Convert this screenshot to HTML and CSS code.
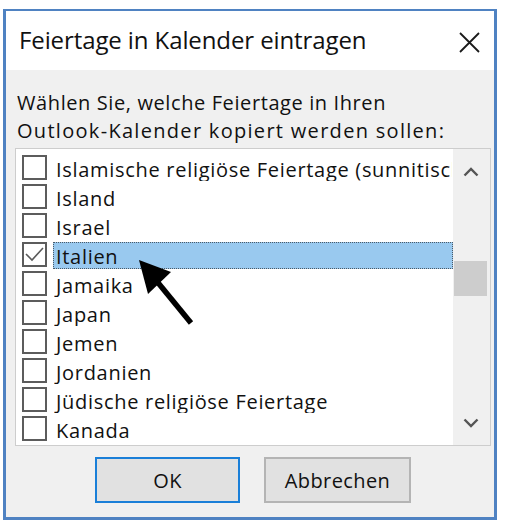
FILE: index.html
```html
<!DOCTYPE html>
<html lang="de">
<head>
    <meta charset="UTF-8">
    <meta name="viewport" content="width=device-width, initial-scale=1.0">
    <title>Feiertage in Kalender eintragen</title>
    <link rel="stylesheet" href="styles.css">
</head>
<body>
    <div class="dialog">
        <div class="titlebar">
            <span class="title">Feiertage in Kalender eintragen</span>
            <svg class="close" width="21" height="21" viewBox="0 0 21 21">
                <path d="M1 1 L20 20 M20 1 L1 20" stroke="#1a1a1a" stroke-width="1.8" fill="none"/>
            </svg>
        </div>

        <div class="content">
            <p class="prompt">Wählen Sie, welche Feiertage in Ihren<br><span class="wide">Outlook-Kalender kopiert werden sollen:</span></p>

            <div class="listbox">
                <ul class="items">
                    <li class="item"><span class="box"></span><span class="label">Islamische religiöse Feiertage (sunnitisch)</span></li>
                    <li class="item"><span class="box"></span><span class="label">Island</span></li>
                    <li class="item"><span class="box"></span><span class="label">Israel</span></li>
                    <li class="item">
                        <span class="box checked">
                            <svg width="21" height="21" viewBox="0 0 21 21"><path d="M2 10 L8 16 L19 4" stroke="#5a5a5a" stroke-width="1.6" fill="none"/></svg>
                        </span>
                        <span class="label selected">Italien</span>
                    </li>
                    <li class="item"><span class="box"></span><span class="label">Jamaika</span></li>
                    <li class="item"><span class="box"></span><span class="label">Japan</span></li>
                    <li class="item"><span class="box"></span><span class="label">Jemen</span></li>
                    <li class="item"><span class="box"></span><span class="label">Jordanien</span></li>
                    <li class="item"><span class="box"></span><span class="label">Jüdische religiöse Feiertage</span></li>
                    <li class="item"><span class="box"></span><span class="label">Kanada</span></li>
                </ul>
                <div class="scrollbar">
                    <span class="arrow up">
                        <svg width="16" height="10" viewBox="0 0 16 10"><path d="M1.5 8.5 L8 2 L14.5 8.5" stroke="#555" stroke-width="2.4" fill="none"/></svg>
                    </span>
                    <div class="track"><div class="thumb"></div></div>
                    <span class="arrow down">
                        <svg width="16" height="10" viewBox="0 0 16 10"><path d="M1.5 1.5 L8 8 L14.5 1.5" stroke="#555" stroke-width="2.4" fill="none"/></svg>
                    </span>
                </div>
            </div>

            <div class="buttons">
                <button class="btn default">OK</button>
                <button class="btn">Abbrechen</button>
            </div>
        </div>

        <!-- annotation arrow drawn over the list -->
        <svg class="pointer" width="70" height="80" viewBox="130 255 70 80">
            <line x1="188" y1="323" x2="152" y2="279" stroke="#000" stroke-width="5.5"/>
            <polygon points="136,260 168,272 145,294" fill="#000"/>
        </svg>
    </div>
</body>
</html>
```

FILE: styles.css
```css
* {
    box-sizing: border-box;
}
body {
    margin: 0;
    background: #fff;
    font-family: "Segoe UI", "Open Sans", sans-serif;
    color: #111;
}
.dialog {
    position: relative;
    margin: 9px 0 0 3px;
    width: 494px;
    height: 511px;
    border: 3px solid #4f82c2;
    border-top-width: 2px;
    background: #f0f0f0;
    display: flex;
    flex-direction: column;
}
.titlebar {
    height: 59px;
    background: #fff;
    display: flex;
    align-items: center;
    justify-content: space-between;
    padding: 0 14px 3px 13px;
}
.title {
    font-size: 24px;
    letter-spacing: -0.1px;
}
.close {
    margin-top: 6px;
}
.content {
    flex: 1;
    padding-top: 19px;
}
.prompt {
    margin: 0 0 3px 11px;
    font-size: 20px;
    line-height: 28px;
    letter-spacing: 0.6px;
}
.prompt .wide {
    letter-spacing: 1.3px;
}
.listbox {
    margin-left: 9px;
    width: 476px;
    height: 298px;
    border: 1px solid #cdcdcd;
    background: #fff;
    display: flex;
}
.items {
    flex: 1;
    min-width: 0;
    list-style: none;
    margin: 0;
    padding: 6px 0 0 0;
    overflow: hidden;
}
.item {
    height: 29px;
    display: flex;
    align-items: flex-start;
    padding-left: 6px;
}
.box {
    flex: none;
    width: 25px;
    height: 25px;
    border: 2px solid #5c5c5c;
    background: #fff;
    display: flex;
    align-items: center;
    justify-content: center;
}
.label {
    flex: 1;
    min-width: 0;
    margin-left: 6px;
    height: 27px;
    padding-left: 2px;
    font-size: 20px;
    line-height: 27px;
    letter-spacing: 0.7px;
    white-space: nowrap;
    overflow: hidden;
    border: 1px solid transparent;
}
.label.selected {
    background: #99c9ef;
    border: 1px dotted #4c5a66;
}
.scrollbar {
    flex: none;
    width: 37px;
    background: #f0f0f0;
    display: flex;
    flex-direction: column;
    padding: 0 3px 0 1px;
}
.arrow {
    display: flex;
    align-items: center;
    justify-content: center;
}
.arrow.up {
    height: 46px;
}
.arrow.down {
    height: 44px;
}
.track {
    flex: 1;
}
.thumb {
    margin-top: 66px;
    height: 35px;
    background: #cdcdcd;
}
.buttons {
    display: flex;
    gap: 24px;
    margin: 11px 0 0 89px;
}
.btn {
    height: 46px;
    width: 145px;
    font-family: inherit;
    font-size: 20px;
    letter-spacing: 0.4px;
    color: #111;
    background: #e1e1e1;
    border: 2px solid #b4b4b4;
    padding: 0;
}
.btn.default {
    border-color: #1a7fd8;
}
.btn + .btn {
    width: 147px;
}
.pointer {
    position: absolute;
    left: 127px;
    top: 244px;
}
```
